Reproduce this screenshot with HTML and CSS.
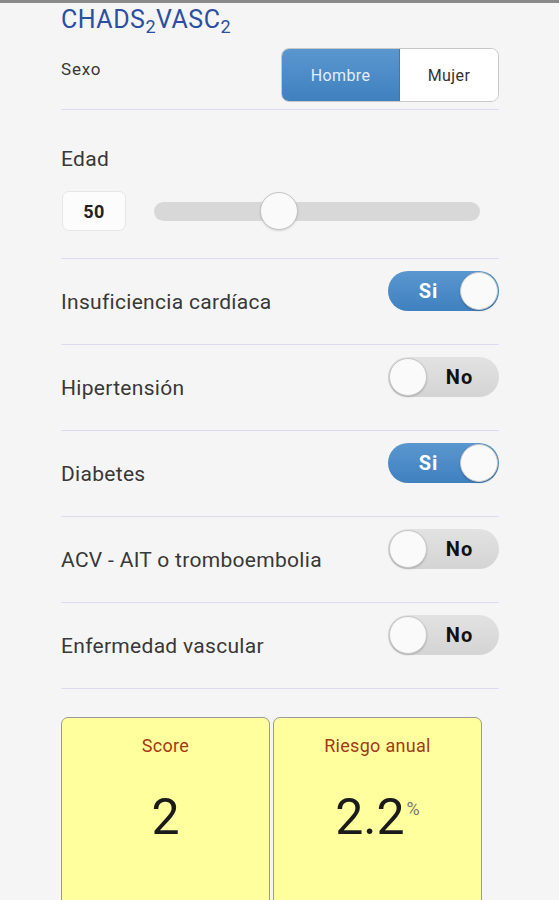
FILE: index.html
```html
<!DOCTYPE html>
<html lang="es">
  <head>
    <meta charset="UTF-8" />
    <meta name="viewport" content="width=device-width, initial-scale=1.0" />
    <title>CHADS2VASC2</title>
    <link rel="stylesheet" href="styles.css">
  </head>
  <body>
    <div class="topbar"></div>
    <div class="container">
      <h1 class="title">CHADS<sub>2</sub>VASC<sub>2</sub></h1>

      <!-- Sexo -->
      <div class="sex-row">
        <span class="sex-label">Sexo</span>
        <div class="segmented">
          <button class="seg seg-active">Hombre</button>
          <button class="seg">Mujer</button>
        </div>
      </div>

      <!-- Edad -->
      <div class="age-block">
        <div class="age-label">Edad</div>
        <div class="age-controls">
          <div class="age-value">50</div>
          <div class="slider">
            <div class="slider-thumb"></div>
          </div>
        </div>
      </div>

      <!-- Factores -->
      <div class="row">
        <span class="row-label">Insuficiencia cardíaca</span>
        <div class="toggle toggle-on"><span class="toggle-text">Si</span><span class="knob"></span></div>
      </div>
      <div class="row">
        <span class="row-label">Hipertensión</span>
        <div class="toggle"><span class="knob"></span><span class="toggle-text">No</span></div>
      </div>
      <div class="row">
        <span class="row-label">Diabetes</span>
        <div class="toggle toggle-on"><span class="toggle-text">Si</span><span class="knob"></span></div>
      </div>
      <div class="row">
        <span class="row-label">ACV - AIT o tromboembolia</span>
        <div class="toggle"><span class="knob"></span><span class="toggle-text">No</span></div>
      </div>
      <div class="row">
        <span class="row-label">Enfermedad vascular</span>
        <div class="toggle"><span class="knob"></span><span class="toggle-text">No</span></div>
      </div>

      <!-- Resultados -->
      <div class="results">
        <div class="card">
          <div class="card-title">Score</div>
          <div class="card-value">2</div>
        </div>
        <div class="card">
          <div class="card-title">Riesgo anual</div>
          <div class="card-value">2.2<span class="unit">%</span></div>
        </div>
      </div>
    </div>
  </body>
</html>
```

FILE: styles.css
```css
/* Page */
body {
  margin: 0;
  background: #f5f5f5;
  font-family: Roboto, "Liberation Sans", sans-serif;
  color: #383838;
  overflow: hidden;
}

.topbar {
  height: 3px;
  background: #8a8a8a;
}

.container {
  width: 438px;
  margin-left: 61px;
}

/* Title */
.title {
  margin: 3px 0 0;
  font-size: 25px;
  letter-spacing: 0.5px;
  line-height: 28px;
  font-weight: normal;
  color: #2c4ea3;
}
.title sub {
  font-size: 18px;
  vertical-align: -5px;
  line-height: 0;
}

/* Sexo */
.sex-row {
  display: flex;
  justify-content: space-between;
  margin-top: 14px;
  padding-bottom: 7px;
  border-bottom: 1px solid #dcdcf0;
}
.sex-label {
  margin-top: 11px;
  font-size: 17px;
  letter-spacing: 0.8px;
  line-height: 20px;
}
.segmented {
  display: flex;
  height: 52px;
  border: 1px solid #c8c8c8;
  border-radius: 8px;
  overflow: hidden;
  background: #fff;
}
.seg {
  border: none;
  background: #fff;
  font-family: inherit;
  font-size: 16px;
  letter-spacing: 0.4px;
  color: #333;
  padding: 0;
  width: 98px;
}
.seg-active {
  width: 118px;
  background: linear-gradient(#5a97cf, #3f80bf);
  color: #e4eef8;
  border-right: 1px solid #3c78b2;
}

/* Edad */
.age-block {
  padding: 37px 0 27px;
  border-bottom: 1px solid #dcdcf0;
}
.age-label {
  font-size: 21px;
  letter-spacing: 0.3px;
  line-height: 24px;
}
.age-controls {
  display: flex;
  align-items: center;
  margin-top: 20px;
}
.age-value {
  width: 62px;
  height: 38px;
  margin-left: 1px;
  border: 1px solid #e6e6e6;
  border-radius: 7px;
  background: #fcfcfc;
  display: flex;
  align-items: center;
  justify-content: center;
  font-weight: bold;
  font-size: 18px;
  letter-spacing: 0.5px;
  color: #222;
}
.slider {
  position: relative;
  margin-left: 28px;
  width: 326px;
  height: 19px;
  border-radius: 10px;
  background: #d8d8d8;
}
.slider-thumb {
  position: absolute;
  left: 106px;
  top: -10px;
  width: 36px;
  height: 36px;
  border-radius: 50%;
  background: #fafafa;
  border: 1px solid #c4c4c4;
  box-shadow: 0 1px 2px rgba(0, 0, 0, 0.15);
}

/* Factor rows */
.row {
  display: flex;
  justify-content: space-between;
  align-items: center;
  height: 85px;
  border-bottom: 1px solid #dcdcf0;
}
.row-label {
  font-size: 21px;
  letter-spacing: 0.3px;
  margin-top: 1px;
}
.toggle {
  align-self: flex-start;
  margin-top: 12px;
  width: 111px;
  height: 40px;
  border-radius: 20px;
  background: linear-gradient(#e2e2e2, #d4d4d4);
  display: flex;
  align-items: center;
  box-sizing: border-box;
  padding: 0 1px;
}
.toggle-on {
  background: linear-gradient(#5a97cf, #3f80bf);
}
.toggle-text {
  flex: 1;
  text-align: center;
  font-weight: bold;
  font-size: 20px;
  letter-spacing: 1px;
  color: #111;
  padding-right: 6px;
}
.toggle-on .toggle-text {
  color: #fff;
  padding-left: 8px;
  padding-right: 0;
}
.knob {
  width: 36px;
  height: 36px;
  border-radius: 50%;
  background: #fafafa;
  border: 1px solid #c8c8c8;
  box-shadow: 0 1px 2px rgba(0, 0, 0, 0.2);
}

/* Results */
.results {
  display: flex;
  gap: 3px;
  margin-top: 28px;
}
.card {
  width: 207px;
  height: 220px;
  background: #ffff9e;
  border: 1px solid #9a9a9a;
  border-radius: 7px;
  text-align: center;
}
.card-title {
  margin-top: 17px;
  font-size: 18px;
  letter-spacing: 0.3px;
  color: #a33a14;
}
.card-value {
  margin-top: 32px;
  font-size: 50px;
  color: #1a1a1a;
}
.unit {
  font-size: 18px;
  margin-left: 2px;
  vertical-align: 19px;
  color: #777;
}
```
